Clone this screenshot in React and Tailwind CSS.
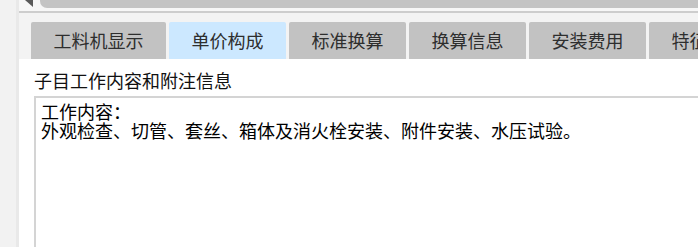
const tabs = [
  { label: "工料机显示", w: "w-[135px]" },
  { label: "单价构成", w: "w-[117px]", active: true },
  { label: "标准换算", w: "w-[117px]" },
  { label: "换算信息", w: "w-[117px]" },
  { label: "安装费用", w: "w-[117px]" },
  { label: "特征描述", w: "w-[117px]" },
];

function TopStrip() {
  return (
    <div className="h-[13px] flex flex-col">
      {/* scroll arrow + track */}
      <div className="h-[11px] flex items-start bg-[#f7f7f7]">
        <div className="w-[6px]" />
        <div className="w-0 h-0 border-l-[8px] border-l-transparent border-t-[7px] border-t-[#5a5a5a]" />
        <div className="w-[7px]" />
        <div className="flex-1 h-[8px] bg-[#c4c4c4] rounded-bl-[7px]" />
      </div>
      <div className="h-[2px] bg-[#cdcdcd]" />
    </div>
  );
}

function Tabs() {
  return (
    <div className="bg-[#f3f3f3] pt-[9px] pl-[12px] flex gap-[3px] overflow-hidden">
      {tabs.map((t) => (
        <div
          key={t.label}
          className={`${t.w} shrink-0 h-[37px] rounded-t-[2px] flex items-center justify-center text-[18px] text-[#2e2e2e] ${
            t.active ? "bg-[#cce8ff]" : "bg-[#c2c2c2]"
          }`}
        >
          {t.label}
        </div>
      ))}
    </div>
  );
}

export default function App() {
  return (
    <div
      className="w-[698px] h-[247px] flex overflow-hidden bg-white"
      style={{ fontFamily: '"Noto Sans CJK SC", "Noto Sans", sans-serif' }}
    >
      <div className="w-[16px] bg-[#f2f2f2]" />
      <div className="w-[3px] bg-[#e9e9e9]" />
      <div className="flex-1 flex flex-col min-w-0">
        <TopStrip />
        <Tabs />
        <div className="flex-1 bg-white pl-[15px] pt-[10px] flex flex-col">
          <div className="text-[18px] leading-[22px] text-[#111]">子目工作内容和附注信息</div>
          <div className="mt-[5px] flex-1 -mr-[4px] border-l-2 border-t-2 border-[#d4d4d4] pl-[5px] pt-[4px] text-[18px] leading-[19px] text-black">
            <div>工作内容：</div>
            <div className="whitespace-nowrap">外观检查、切管、套丝、箱体及消火栓安装、附件安装、水压试验。</div>
          </div>
        </div>
      </div>
    </div>
  );
}
